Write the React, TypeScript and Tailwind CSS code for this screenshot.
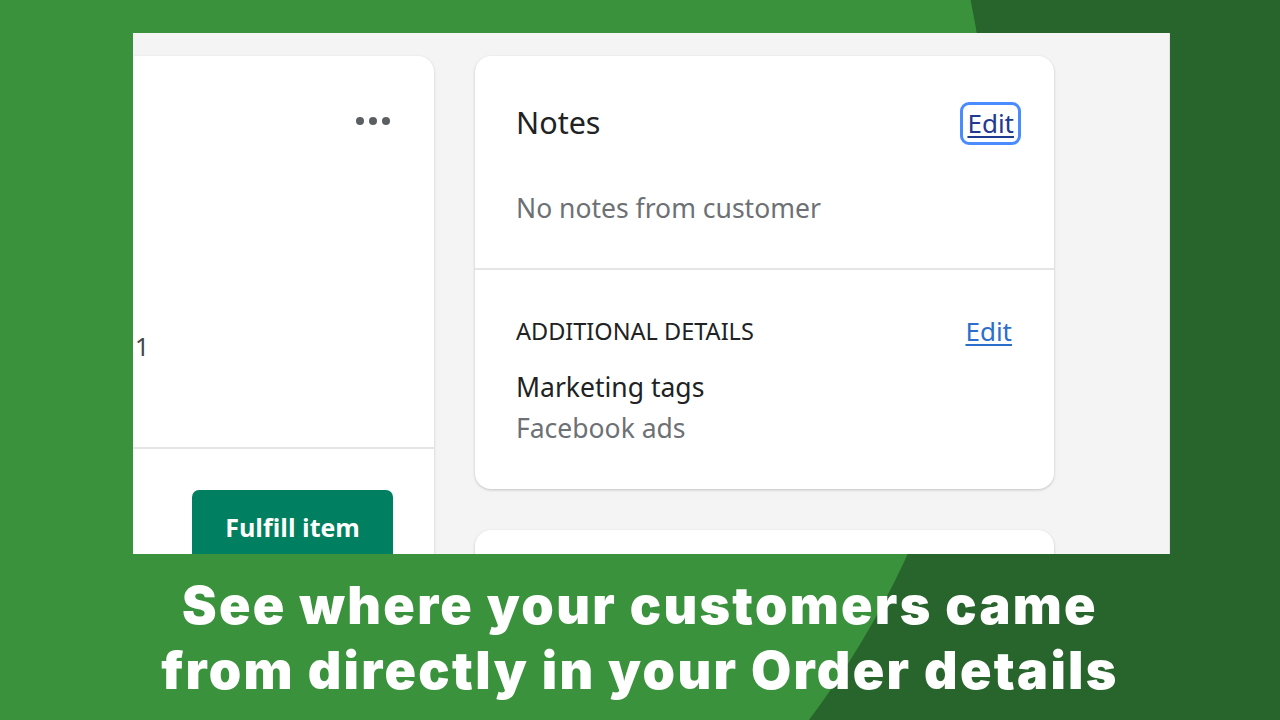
import React from "react";

export default function App() {
  return (
    <div className="relative w-[1280px] h-[720px] overflow-hidden bg-[#28652c]" style={{ fontFamily: '"Noto Sans", "Open Sans", sans-serif' }}>
      {/* decorative light-green circle */}
      <div className="absolute left-[-805px] top-[-716px] w-[1794px] h-[1794px] rounded-full bg-[#3a923d]" />

      <div className="relative flex flex-col">
        {/* screenshot frame */}
        <div className="ml-[133px] mt-[33px] w-[1037px] h-[521px] bg-[#f4f4f4] overflow-hidden flex items-start border-r border-[#e3e3e3]">
          {/* left card */}
          <div className="mt-[23px] w-[301px] h-[560px] bg-white rounded-tr-2xl shadow-[0_1px_3px_rgba(0,0,0,0.18)] flex flex-col shrink-0">
            <div className="h-[391px] shrink-0 flex flex-col">
              <div className="flex justify-end pr-[44px] pt-[61px]">
                <span className="flex gap-[5px]">
                  <span className="w-[8px] h-[8px] rounded-full bg-[#5c5f62]" />
                  <span className="w-[8px] h-[8px] rounded-full bg-[#5c5f62]" />
                  <span className="w-[8px] h-[8px] rounded-full bg-[#5c5f62]" />
                </span>
              </div>
              <div className="mt-[204px] pl-[2px] text-[25px] leading-[34px] text-[#44474a]">1</div>
            </div>
            <div className="border-t-2 border-[#e4e5e7] flex-1 pt-[41px] pl-[59px]">
              <div className="w-[201px] h-[80px] rounded-t-[7px] bg-[#008060] flex justify-center pt-[17px]">
                <span className="text-white text-[25px] font-bold leading-[40px]" style={{ fontFamily: '"Open Sans", sans-serif' }}>Fulfill item</span>
              </div>
            </div>
          </div>

          {/* right column */}
          <div className="ml-[41px] mt-[23px] w-[579px] flex flex-col gap-[41px] shrink-0">
            <div className="h-[433px] shrink-0 bg-white rounded-2xl shadow-[0_1px_3px_rgba(0,0,0,0.2)] flex flex-col">
              <div className="h-[212px] shrink-0 pl-[41px] pr-[33px] pt-[44px]">
                <div className="flex items-center justify-between">
                  <span className="text-[30.5px] leading-[42px] text-[#202223]">Notes</span>
                  <span className="translate-y-[2px] px-[4px] h-[43px] flex items-center rounded-[9px] border-[3px] border-[#4a8cff] text-[26px] text-[#1f3a8f] underline underline-offset-[3px]">Edit</span>
                </div>
                <div className="mt-[47px] text-[26.5px] leading-[36px] text-[#6d7175]">No notes from customer</div>
              </div>
              <div className="border-t-2 border-[#e4e5e7] pl-[41px] pr-[42px] pt-[46px]">
                <div className="flex items-center justify-between">
                  <span className="text-[23.5px] leading-[30px] text-[#202223] uppercase">Additional details</span>
                  <span className="text-[26px] leading-[30px] text-[#2c6ecb] underline underline-offset-[3px]">Edit</span>
                </div>
                <div className="mt-[23px] text-[26.5px] leading-[36px] text-[#202223]">Marketing tags</div>
                <div className="mt-[5px] text-[26.5px] leading-[36px] text-[#6d7175]">Facebook ads</div>
              </div>
            </div>
            <div className="h-[200px] shrink-0 bg-white rounded-2xl shadow-[0_1px_3px_rgba(0,0,0,0.2)]" />
          </div>
        </div>

        {/* caption */}
        <div className="mt-[19px] flex flex-col items-center text-white text-[52px] font-black leading-[65px] tracking-[2.3px]" style={{ fontFamily: 'Inter, "Open Sans", sans-serif' }}>
          <span>See where your customers came</span>
          <span>from directly in your Order details</span>
        </div>
      </div>
    </div>
  );
}
